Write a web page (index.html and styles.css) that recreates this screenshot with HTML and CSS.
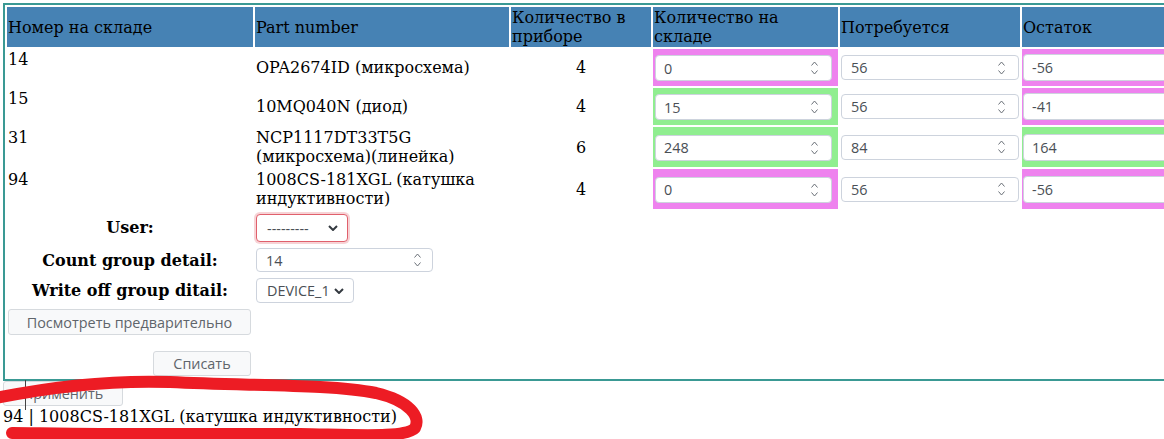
FILE: index.html
```html
<!DOCTYPE html>
<html lang="ru">
<head>
<meta charset="utf-8">
<title>Списание деталей</title>
<link rel="stylesheet" href="styles.css">
</head>
<body>
<div class="page">
  <form class="frame">
    <table class="grid">
      <colgroup>
        <col class="c1"><col class="c2"><col class="c3"><col class="c4"><col class="c5"><col class="c6">
      </colgroup>
      <thead>
        <tr>
          <th>Номер на складе</th>
          <th>Part number</th>
          <th>Количество в приборе</th>
          <th>Количество на складе</th>
          <th>Потребуется</th>
          <th>Остаток</th>
        </tr>
      </thead>
      <tbody>
        <tr>
          <td class="num">14</td>
          <td class="part">OPA2674ID (микросхема)</td>
          <td class="qty">4</td>
          <td class="stock bad"><div class="field"><input type="text" value="0" readonly><svg class="spinner" viewBox="0 0 7 14" width="7" height="14"><path d="M0.5 4.5 L3.5 1 L6.5 4.5 M0.5 9.5 L3.5 13 L6.5 9.5"/></svg></div></td>
          <td class="need"><div class="field"><input type="text" value="56" readonly><svg class="spinner" viewBox="0 0 7 14" width="7" height="14"><path d="M0.5 4.5 L3.5 1 L6.5 4.5 M0.5 9.5 L3.5 13 L6.5 9.5"/></svg></div></td>
          <td class="rest bad"><div class="field"><input type="text" value="-56" readonly></div></td>
        </tr>
        <tr>
          <td class="num">15</td>
          <td class="part">10MQ040N (диод)</td>
          <td class="qty">4</td>
          <td class="stock good"><div class="field"><input type="text" value="15" readonly><svg class="spinner" viewBox="0 0 7 14" width="7" height="14"><path d="M0.5 4.5 L3.5 1 L6.5 4.5 M0.5 9.5 L3.5 13 L6.5 9.5"/></svg></div></td>
          <td class="need"><div class="field"><input type="text" value="56" readonly><svg class="spinner" viewBox="0 0 7 14" width="7" height="14"><path d="M0.5 4.5 L3.5 1 L6.5 4.5 M0.5 9.5 L3.5 13 L6.5 9.5"/></svg></div></td>
          <td class="rest bad"><div class="field"><input type="text" value="-41" readonly></div></td>
        </tr>
        <tr>
          <td class="num">31</td>
          <td class="part">NCP1117DT33T5G (микросхема)(линейка)</td>
          <td class="qty">6</td>
          <td class="stock good"><div class="field"><input type="text" value="248" readonly><svg class="spinner" viewBox="0 0 7 14" width="7" height="14"><path d="M0.5 4.5 L3.5 1 L6.5 4.5 M0.5 9.5 L3.5 13 L6.5 9.5"/></svg></div></td>
          <td class="need"><div class="field"><input type="text" value="84" readonly><svg class="spinner" viewBox="0 0 7 14" width="7" height="14"><path d="M0.5 4.5 L3.5 1 L6.5 4.5 M0.5 9.5 L3.5 13 L6.5 9.5"/></svg></div></td>
          <td class="rest good"><div class="field"><input type="text" value="164" readonly></div></td>
        </tr>
        <tr>
          <td class="num">94</td>
          <td class="part">1008CS-181XGL (катушка индуктивности)</td>
          <td class="qty">4</td>
          <td class="stock bad"><div class="field"><input type="text" value="0" readonly><svg class="spinner" viewBox="0 0 7 14" width="7" height="14"><path d="M0.5 4.5 L3.5 1 L6.5 4.5 M0.5 9.5 L3.5 13 L6.5 9.5"/></svg></div></td>
          <td class="need"><div class="field"><input type="text" value="56" readonly><svg class="spinner" viewBox="0 0 7 14" width="7" height="14"><path d="M0.5 4.5 L3.5 1 L6.5 4.5 M0.5 9.5 L3.5 13 L6.5 9.5"/></svg></div></td>
          <td class="rest bad"><div class="field"><input type="text" value="-56" readonly></div></td>
        </tr>
        <tr class="frow">
          <th class="lbl">User:</th>
          <td class="wcell" colspan="5"><div class="select user invalid"><span>---------</span><svg class="chev" viewBox="0 0 10 6" width="10" height="6"><path d="M1 1 L5 5 L9 1"/></svg></div></td>
        </tr>
        <tr class="frow">
          <th class="lbl">Count group detail:</th>
          <td class="wcell" colspan="5"><div class="field count"><input type="text" value="14" readonly><svg class="spinner" viewBox="0 0 7 14" width="7" height="14"><path d="M0.5 4.5 L3.5 1 L6.5 4.5 M0.5 9.5 L3.5 13 L6.5 9.5"/></svg></div></td>
        </tr>
        <tr class="frow">
          <th class="lbl">Write off group ditail:</th>
          <td class="wcell" colspan="5"><div class="select device"><span>DEVICE_1</span><svg class="chev" viewBox="0 0 10 6" width="10" height="6"><path d="M1 1 L5 5 L9 1"/></svg></div></td>
        </tr>
        <tr>
          <td class="acts">
            <div class="actions">
              <button type="button" class="btn preview">Посмотреть предварительно</button>
              <button type="button" class="btn writeoff">Списать</button>
            </div>
          </td>
          <td colspan="5"></td>
        </tr>
      </tbody>
    </table>
  </form>
  <button type="button" class="btn apply">Применить</button>
  <p class="result">94 | 1008CS-181XGL (катушка индуктивности)</p>
  <span class="caret"></span>
  <svg class="scribble" viewBox="0 360 440 79" width="440" height="79">
    <path d="M-4 398 C 50 387, 110 380, 170 382 C 250 386, 330 384, 376 393 C 410 401, 421 417, 415 428 C 406 438, 360 435, 300 434 L 100 434 C 60 434, 30 433, 12 433"/>
  </svg>
</div>
</body>
</html>
```

FILE: styles.css
```css
html, body {
  margin: 0;
  padding: 0;
  overflow: hidden;
  background: #ffffff;
}

body {
  font-family: "DejaVu Serif", "Liberation Serif", serif;
  font-size: 16px;
  line-height: 19px;
  color: #000;
}

.page {
  position: relative;
  padding: 3px 0 0 3px;
  width: 1300px;
  height: 436px;
}

.frame {
  display: block;
  width: max-content;
  margin: 0;
  border: 2px solid #3a9994;
}

.grid {
  table-layout: fixed;
  width: 1209px;
  border-collapse: separate;
  border-spacing: 2px;
}

.c1 { width: 246px; }
.c2 { width: 254px; }
.c3 { width: 140px; }
.c4 { width: 185px; }
.c5 { width: 180px; }
.c6 { width: 190px; }

.grid td,
.grid th {
  padding: 1px;
}

.grid thead th {
  background: #4682b4;
  font-weight: normal;
  text-align: left;
  vertical-align: middle;
  height: 38px;
}

.num {
  vertical-align: top;
}

.part {
  vertical-align: middle;
}

.qty {
  text-align: center;
  vertical-align: middle;
}

.stock {
  padding: 6px 6px 5px 2px !important;
  vertical-align: middle;
}

.need {
  vertical-align: middle;
}

.rest {
  padding: 5px 1px !important;
  vertical-align: middle;
}

.bad { background: #ee82ee; }
.good { background: #90ee90; }

.field {
  display: flex;
  align-items: center;
  box-sizing: border-box;
  height: 26px;
  border: 1px solid #cdd3dd;
  border-radius: 4px;
  background: #fff;
  padding: 0 13px 0 8px;
}

.need .field {
  height: 25px;
  padding-left: 9px;
}

.rest .field {
  height: 27px;
  padding-left: 8px;
}

.field input {
  flex: 1;
  min-width: 0;
  border: 0;
  outline: 0;
  padding: 0;
  margin: 0;
  background: transparent;
  font-family: "Open Sans", "Noto Sans", sans-serif;
  font-size: 14.4px;
  color: #4a4f55;
}

.spinner {
  flex: none;
  fill: none;
  stroke: #6b7078;
  stroke-width: 1;
}

.frow .lbl {
  font-weight: bold;
  text-align: center;
  vertical-align: middle;
}

.wcell {
  vertical-align: middle;
}

.select {
  display: flex;
  align-items: center;
  justify-content: space-between;
  box-sizing: border-box;
  border: 1px solid #cdd3dd;
  border-radius: 4px;
  background: #fff;
  padding: 0 9px 0 10px;
  font-family: "Open Sans", "Noto Sans", sans-serif;
  font-size: 14.4px;
  color: #4a4f55;
}

.select.user {
  width: 92px;
  height: 28px;
  margin: 2px 0 1px;
}

.select.invalid {
  border-color: #e0606c;
  box-shadow: 0 0 0 2px rgba(220, 53, 69, 0.22);
}

.select.device {
  width: 98px;
  height: 25px;
  margin: 1px 0;
}

.chev {
  flex: none;
  fill: none;
  stroke: #343a40;
  stroke-width: 2;
}

.field.count {
  width: 177px;
  height: 24px;
  margin: 1px 0;
  padding: 0 11px 0 9px;
}

.acts {
  vertical-align: top;
}

.actions {
  display: flex;
  flex-direction: column;
  align-items: flex-end;
  row-gap: 16px;
  padding: 1px 1px 0 0;
}

.btn {
  box-sizing: border-box;
  border: 1px solid #d6dade;
  border-radius: 3px;
  background: #f8f9fa;
  font-family: "Open Sans", "Noto Sans", sans-serif;
  font-size: 14.4px;
  color: #5f656b;
  padding: 0 8px;
  margin: 0;
}

.btn.preview {
  width: 243px;
  height: 26px;
}

.btn.writeoff {
  width: 98px;
  height: 25px;
}

.btn.apply {
  display: block;
  width: 120px;
  height: 25px;
}

.result {
  margin: 0;
  padding-top: 1px;
}

.caret {
  position: absolute;
  left: 25px;
  top: 380px;
  width: 1px;
  height: 30px;
  background: #444;
}

.scribble {
  position: absolute;
  left: 0;
  top: 360px;
  fill: none;
  stroke: #ed1c24;
  stroke-width: 12;
  stroke-linecap: round;
  stroke-linejoin: round;
}
```
